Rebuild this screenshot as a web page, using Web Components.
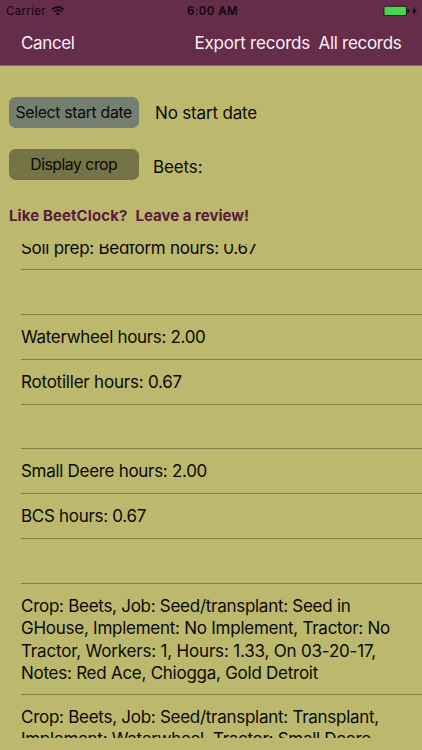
<!DOCTYPE html>
<html lang="en">
<head>
<meta charset="utf-8">
<title>BeetClock records</title>
<style>
html,body{margin:0;height:100%}
body{background:#bcb96f;font-family:Inter,"Liberation Sans",sans-serif;color:#0a0a05;overflow:hidden}
</style>
</head>
<body>
<records-screen></records-screen>
<script>
const define = (name, html, ready) => customElements.define(name, class extends HTMLElement {
  connectedCallback() {
    if (this.shadowRoot) return;
    this.attachShadow({mode: 'open'}).innerHTML = html;
    if (ready) ready(this, this.shadowRoot);
  }
});

// One line of text, tracked so that it occupies the width given in "w".
define('fit-text', `<style>:host{display:block;width:max-content;white-space:pre}span{display:inline-block}</style><span><slot></slot></span>`,
  (el, root) => {
    const span = root.querySelector('span');
    const n = el.textContent.length;
    const natural = span.getBoundingClientRect().width;
    span.style.letterSpacing = ((+el.getAttribute('w') - natural) / n).toFixed(4) + 'px';
  });

define('status-bar', `<style>
:host{display:grid;grid-template-columns:1fr auto 1fr;align-items:center;height:22px;font-size:11.5px;color:#140710}
.l{display:flex;align-items:center;gap:5px;padding-left:6px}
.r{display:flex;justify-content:flex-end;align-items:center;padding-right:4.5px}
.t{font-weight:600;padding-left:3px}
svg{display:block}
</style>
<div class="l"><fit-text w="40">Carrier</fit-text>
<svg width="14" height="10" viewBox="0 0 14 10" fill="none" stroke="#140710" stroke-width="1.7"><path d="M.9 3.5Q6.8-1.5 12.7 3.5M3 5.8Q6.8 2.6 10.6 5.8"/><path d="M6.8 9.5L4.6 7.3Q6.8 5.7 9 7.3Z" fill="#140710" stroke="none"/></svg></div>
<fit-text class="t" w="51">6:00 AM</fit-text>
<div class="r"><svg width="35" height="12" viewBox="0 0 35 12"><rect x=".9" y="1.2" width="22.6" height="9.4" rx="1.5" fill="#46d451" stroke="#23141d"/><path d="M24.5 4Q26.2 4.2 26.2 5.9T24.5 7.8Z" fill="#140710"/><path d="M32.6 1.3L28.8 6.4H31L29.9 10.5L34.1 5.2H31.7Z" fill="#140710"/></svg></div>`);

define('nav-bar', `<style>
:host{display:flex;align-items:center;height:41px;padding:0 20.5px 0 21px;color:#fbeff6;font-size:17px;line-height:22px}
.a{margin-left:auto;margin-right:8.5px}
</style><fit-text w="53.5">Cancel</fit-text><fit-text class="a" w="115.5">Export records</fit-text><fit-text w="83">All records</fit-text>`);

define('pill-button', `<style>
:host{display:flex;align-items:center;justify-content:center;box-sizing:border-box;width:130.5px;height:31px;border-radius:6.5px;background:var(--fill);font-size:15.8px;line-height:20px}
</style><slot></slot>`);

define('list-row', `<style>
:host{display:block;box-sizing:border-box;height:var(--h,44.8px);margin-left:21px;padding-top:11px;border-bottom:1px solid #827f4b;font-size:17px;line-height:22.4px}
</style><slot></slot>`);

define('records-screen', `<style>
:host{display:flex;flex-direction:column;height:750px;width:422px;overflow:hidden}
header{background:#652d49;height:65px;border-bottom:1px solid #8d6550;flex:none;box-sizing:content-box}
.controls{display:grid;grid-template-columns:130.5px 1fr;column-gap:16px;row-gap:21px;padding:31px 8px 0 8.5px;font-size:17px;line-height:22px}
.controls>fit-text{align-self:center}
.beets{margin:4px 0 0 -2px}
.review{display:flex;gap:8px;padding:26px 0 0 9px;height:38px;font-size:15px;line-height:20px;font-weight:700;color:#591b38}
.list{height:494px;overflow:hidden;flex:none}
.first{margin-top:-18.6px;padding-top:12px}
</style>
<header><status-bar></status-bar><nav-bar></nav-bar></header>
<div class="controls">
<pill-button style="--fill:#747e71"><fit-text w="116.5">Select start date</fit-text></pill-button><fit-text w="102">No start date</fit-text>
<pill-button style="--fill:#747447"><fit-text w="87">Display crop</fit-text></pill-button><fit-text class="beets" w="49.5">Beets:</fit-text>
</div>
<div class="review"><fit-text w="118.5">Like BeetClock?</fit-text><fit-text w="113.5">Leave a review!</fit-text></div>
<div class="list">
<list-row class="first"><fit-text w="236">Soil prep: Bedform hours: 0.67</fit-text></list-row>
<list-row></list-row>
<list-row><fit-text w="184.5">Waterwheel hours: 2.00</fit-text></list-row>
<list-row><fit-text w="161">Rototiller hours: 0.67</fit-text></list-row>
<list-row></list-row>
<list-row><fit-text w="186">Small Deere hours: 2.00</fit-text></list-row>
<list-row><fit-text w="125">BCS hours: 0.67</fit-text></list-row>
<list-row></list-row>
<list-row style="--h:111px"><fit-text w="329.5">Crop: Beets, Job: Seed/transplant: Seed in</fit-text><fit-text w="369">GHouse, Implement: No Implement, Tractor: No</fit-text><fit-text w="355">Tractor, Workers: 1, Hours: 1.33, On 03-20-17,</fit-text><fit-text w="297">Notes: Red Ace, Chiogga, Gold Detroit</fit-text></list-row>
<list-row style="--h:111px"><fit-text w="358">Crop: Beets, Job: Seed/transplant: Transplant,</fit-text><fit-text w="354.5">Implement: Waterwheel, Tractor: Small Deere,</fit-text></list-row>
</div>`);
</script>
</body>
</html>
